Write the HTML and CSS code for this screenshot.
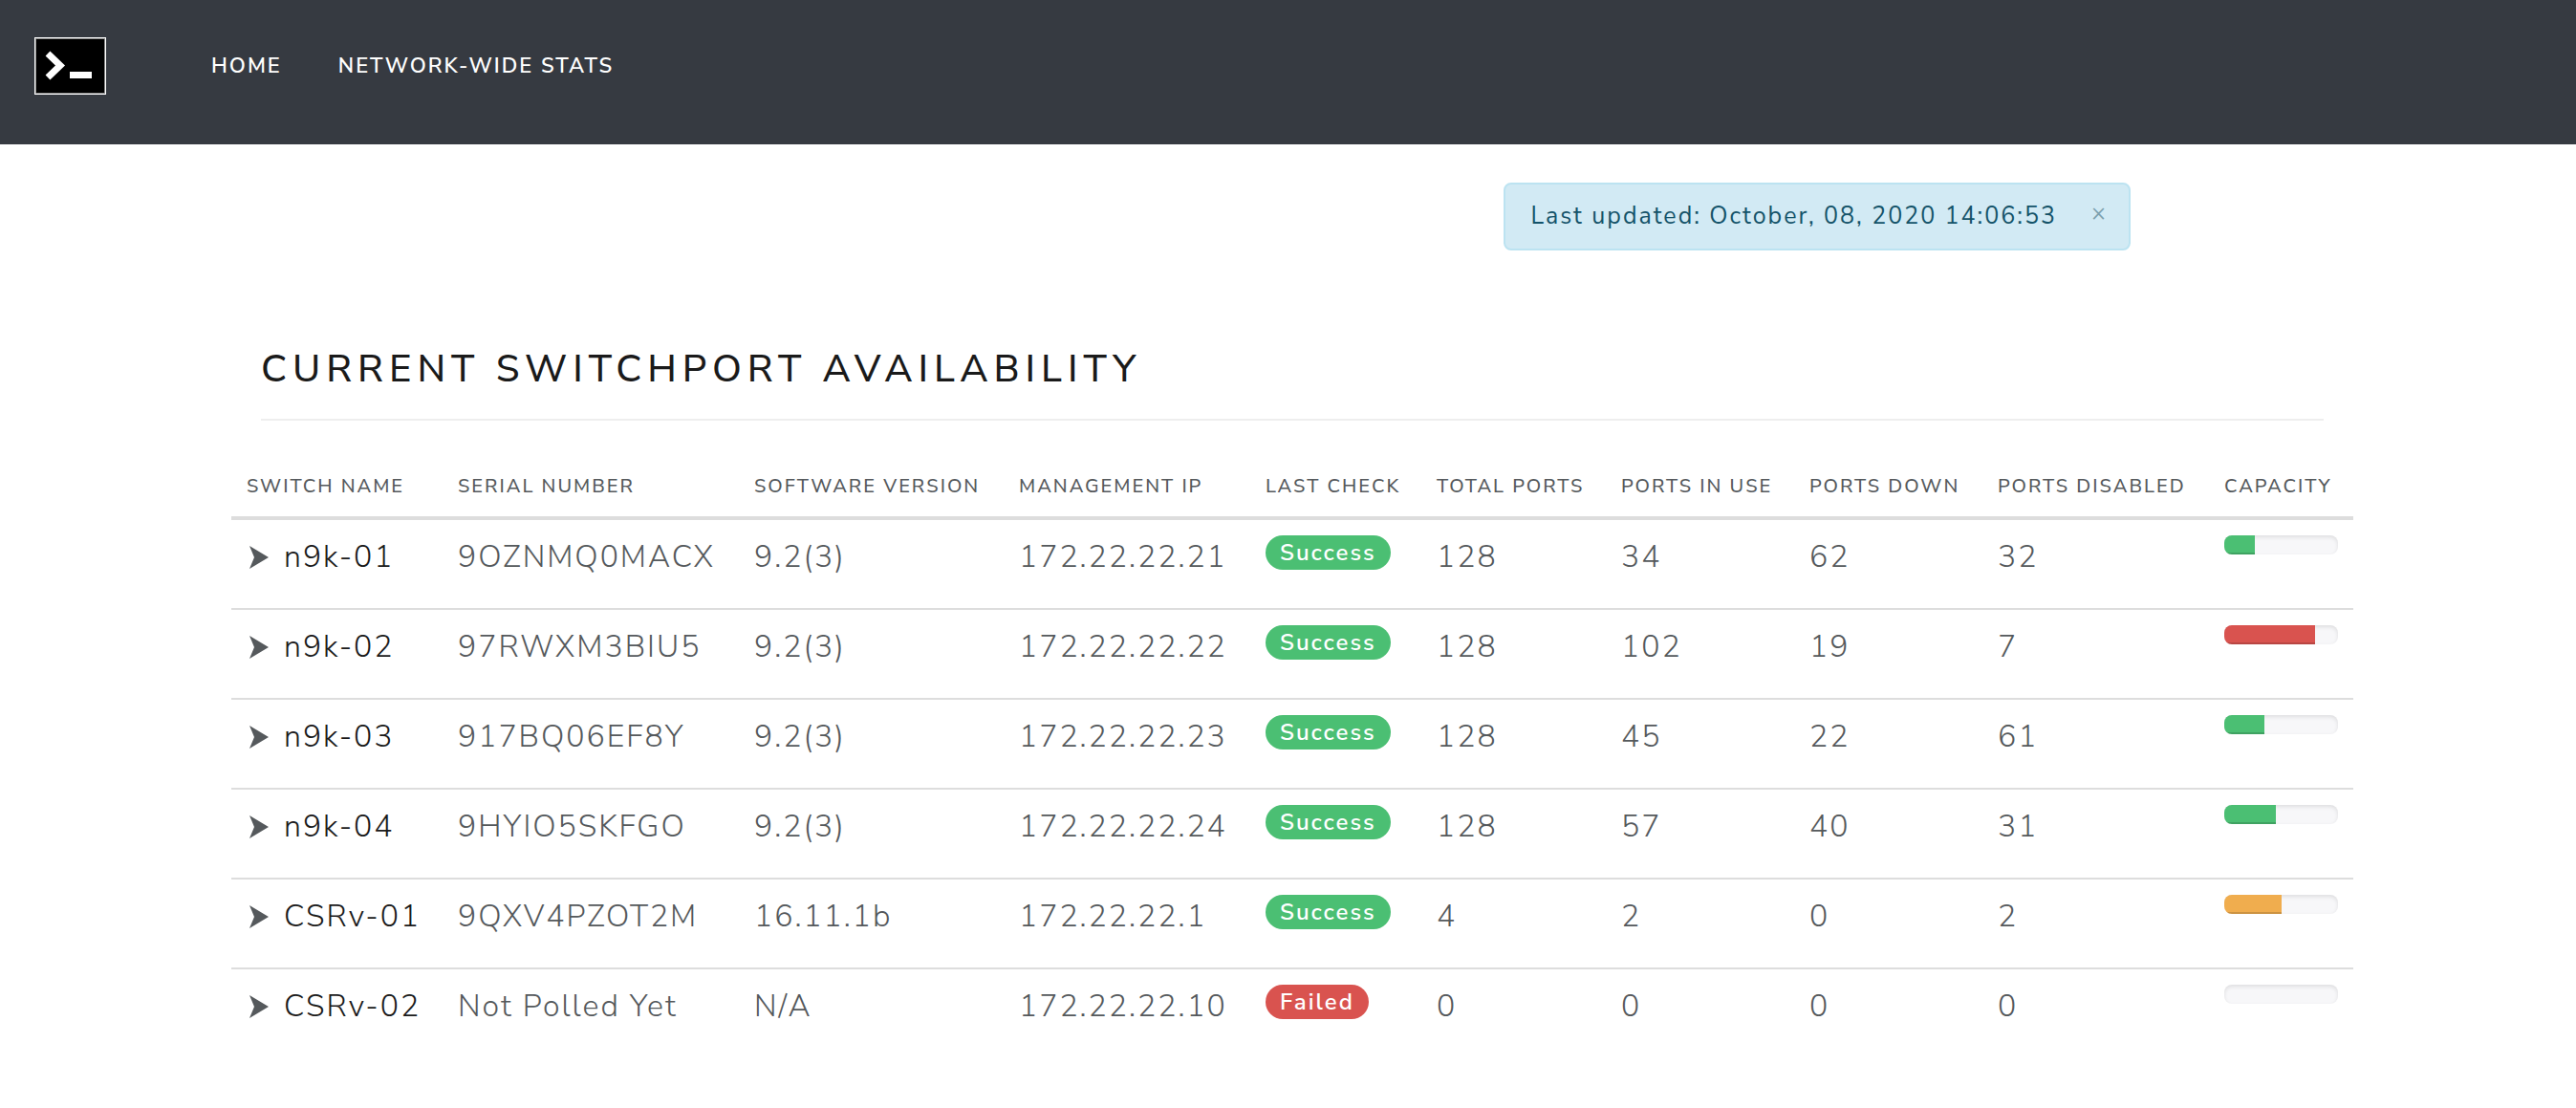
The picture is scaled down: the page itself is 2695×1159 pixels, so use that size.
FILE: index.html
```
<!DOCTYPE html>
<html lang="en">
<head>
<meta charset="utf-8">
<meta name="viewport" content="width=device-width, initial-scale=1">
<title>Current Switchport Availability</title>
<link rel="stylesheet" href="styles.css">
</head>
<body>
<svg class="sprite" aria-hidden="true">
  <symbol id="arrow" viewBox="0 0 20 24"><path d="M0 0 20 12 0 24 5 12z"/></symbol>
</svg>
<nav class="navbar">
  <a class="brand" href="#" aria-label="Switchport home">
    <svg class="logo" viewBox="0 0 75 60" aria-hidden="true">
      <rect width="75" height="60" fill="#fff"/>
      <rect x="1" y="1" width="73" height="58" fill="#888"/>
      <rect x="2" y="2" width="71" height="56" fill="#000"/>
      <path d="M14 17 27 29.500 14 42" fill="none" stroke="#fff" stroke-width="7"/>
      <rect x="37" y="36" width="23" height="7" fill="#fff"/>
    </svg>
  </a>
  <a class="nav-link" href="#">HOME</a>
  <a class="nav-link" href="#">NETWORK-WIDE STATS</a>
</nav>
<main class="container">
  <div class="alert" role="status">
    <span>Last updated: October, 08, 2020 14:06:53</span>
    <button class="close" type="button" aria-label="Close">×</button>
  </div>
  <h1 class="title">CURRENT SWITCHPORT AVAILABILITY</h1>
  <table class="switches">
    <colgroup>
      <col class="c-name"><col class="c-serial"><col class="c-version"><col class="c-ip"><col class="c-check">
      <col class="c-total"><col class="c-use"><col class="c-down"><col class="c-disabled"><col class="c-capacity">
    </colgroup>
    <thead>
      <tr><th>SWITCH NAME</th><th>SERIAL NUMBER</th><th>SOFTWARE VERSION</th><th>MANAGEMENT IP</th><th>LAST CHECK</th><th>TOTAL PORTS</th><th>PORTS IN USE</th><th>PORTS DOWN</th><th>PORTS DISABLED</th><th>CAPACITY</th></tr>
    </thead>
    <tbody>
      <tr><td><a class="name" href="#"><svg class="arrow"><use href="#arrow"/></svg>n9k-01</a></td><td>9OZNMQ0MACX</td><td>9.2(3)</td><td>172.22.22.21</td><td><span class="badge">Success</span></td><td>128</td><td>34</td><td>62</td><td>32</td><td><div class="progress"><div class="bar" style="width:27%"></div></div></td></tr>
      <tr><td><a class="name" href="#"><svg class="arrow"><use href="#arrow"/></svg>n9k-02</a></td><td>97RWXM3BIU5</td><td>9.2(3)</td><td>172.22.22.22</td><td><span class="badge">Success</span></td><td>128</td><td>102</td><td>19</td><td>7</td><td><div class="progress"><div class="bar danger" style="width:80%"></div></div></td></tr>
      <tr><td><a class="name" href="#"><svg class="arrow"><use href="#arrow"/></svg>n9k-03</a></td><td>917BQ06EF8Y</td><td>9.2(3)</td><td>172.22.22.23</td><td><span class="badge">Success</span></td><td>128</td><td>45</td><td>22</td><td>61</td><td><div class="progress"><div class="bar" style="width:35%"></div></div></td></tr>
      <tr><td><a class="name" href="#"><svg class="arrow"><use href="#arrow"/></svg>n9k-04</a></td><td>9HYIO5SKFGO</td><td>9.2(3)</td><td>172.22.22.24</td><td><span class="badge">Success</span></td><td>128</td><td>57</td><td>40</td><td>31</td><td><div class="progress"><div class="bar" style="width:45%"></div></div></td></tr>
      <tr><td><a class="name" href="#"><svg class="arrow"><use href="#arrow"/></svg>CSRv-01</a></td><td>9QXV4PZOT2M</td><td>16.11.1b</td><td>172.22.22.1</td><td><span class="badge">Success</span></td><td>4</td><td>2</td><td>0</td><td>2</td><td><div class="progress"><div class="bar warning" style="width:50%"></div></div></td></tr>
      <tr><td><a class="name" href="#"><svg class="arrow"><use href="#arrow"/></svg>CSRv-02</a></td><td>Not Polled Yet</td><td>N/A</td><td>172.22.22.10</td><td><span class="badge danger">Failed</span></td><td>0</td><td>0</td><td>0</td><td>0</td><td><div class="progress"></div></td></tr>
    </tbody>
  </table>
</main>
</body>
</html>
```
FILE: styles.css
```
* { box-sizing: border-box; }

body {
  margin: 0;
  background: #fff;
  color: #55595c;
  font-family: "Nunito Sans", Nunito, "Open Sans", sans-serif;
  font-size: 32px;
  font-weight: 300;
  line-height: 46px;
  letter-spacing: 2px;
}

a { color: inherit; text-decoration: none; }

.sprite { display: none; }

.navbar {
  display: flex;
  align-items: flex-start;
  min-height: 151px;
  padding: 39px 36px;
  background: #363a41;
}

.brand { margin-right: 94px; }
.logo { display: block; width: 75px; height: 60px; }

.nav-link {
  padding: 0 16px;
  margin-right: 27px;
  color: #fff;
  font-size: 22px;
  font-weight: 600;
  line-height: 60px;
}

.container {
  padding: 40px 233px 0 242px;
}

.alert {
  display: flex;
  align-items: flex-start;
  width: max-content;
  margin: 0 233px 0 auto;
  padding: 14px 24px 15px 26px;
  gap: 36px;
  border: 2px solid #bce3f1;
  border-radius: 8px;
  background: #d2eaf4;
  color: #145369;
  font-size: 25px;
  font-weight: 400;
  line-height: 38px;
}

.close {
  padding: 0;
  border: 0;
  background: none;
  color: #7ca0ae;
  font: inherit;
  line-height: 32px;
}

.title {
  margin: 92px 31px 48px;
  padding-bottom: 20px;
  border-bottom: 2px solid #eee;
  color: #1a1a1a;
  font-size: 40px;
  font-weight: 500;
  line-height: 64px;
  letter-spacing: 6px;
}

.switches {
  width: 100%;
  border-collapse: separate;
  border-spacing: 0;
  table-layout: fixed;
}

.c-name { width: 221px; }
.c-serial { width: 310px; }
.c-version { width: 277px; }
.c-ip { width: 258px; }
.c-check { width: 179px; }
.c-total { width: 193px; }
.c-use, .c-down { width: 197px; }
.c-disabled { width: 237px; }
.c-capacity { width: 151px; }

th, td {
  padding: 0 16px;
  text-align: left;
  vertical-align: top;
  white-space: nowrap;
}

th {
  height: 56px;
  border-bottom: 4px solid #ddd;
  font-size: 20px;
  font-weight: 500;
  line-height: 42px;
}

td {
  height: 94px;
  padding-top: 16px;
  border-bottom: 2px solid #ddd;
}

tbody tr:last-child td { border-bottom: 0; }

.name {
  display: flex;
  align-items: center;
  gap: 16px;
  color: #1a1a1a;
}

.arrow {
  flex: none;
  width: 20px;
  height: 24px;
  margin-left: 3px;
  fill: #55595c;
}

.badge {
  display: block;
  width: max-content;
  padding: 0 15px;
  border-radius: 20px;
  background: #4bbf73;
  color: #fff;
  font-size: 24px;
  font-weight: 600;
  line-height: 36px;
}

.badge.danger { background: #d9534f; }

.progress {
  height: 20px;
  overflow: hidden;
  border-radius: 8px;
  background: #f7f7f9;
  box-shadow: inset 0 2px 4px rgba(0, 0, 0, 0.1);
}

.bar {
  height: 100%;
  background: #4bbf73;
  box-shadow: inset 0 -2px 0 rgba(0, 0, 0, 0.15);
}

.bar.danger { background: #d9534f; }
.bar.warning { background: #f0ad4e; }
```
